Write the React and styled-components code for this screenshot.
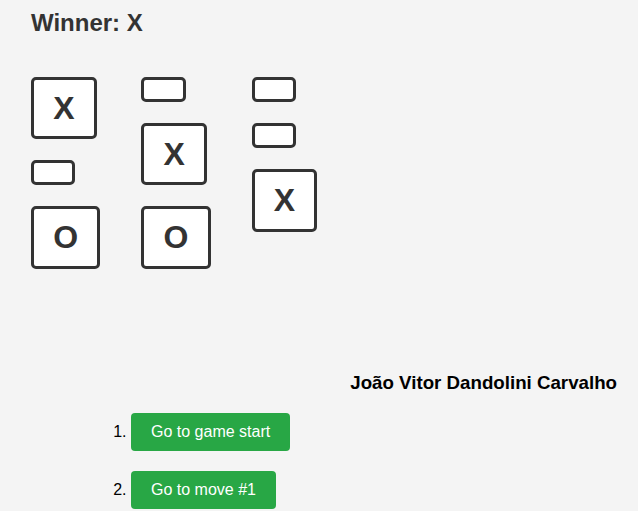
import React from "react";
import styled, { createGlobalStyle } from "styled-components";

const GlobalStyle = createGlobalStyle`
  html, body {
    margin: 0;
    overflow: hidden;
    background: #f4f4f4;
  }
  body {
    font-family: "Liberation Sans", Arial, sans-serif;
  }
`;

const Page = styled.div`
  padding: 9px 21px 0 31px;
`;

const Status = styled.div`
  font-size: 24px;
  font-weight: 700;
  color: #333;
`;

const Board = styled.div`
  display: flex;
  gap: 41px;
  margin-top: 40px;
`;

const Column = styled.div`
  display: flex;
  flex-direction: column;
  align-items: flex-start;
  gap: 21px;
`;

const Square = styled.button`
  font-family: "Liberation Sans", Arial, sans-serif;
  font-size: 32px;
  font-weight: 700;
  color: #333;
  background: #fff;
  border: 3px solid #333;
  border-radius: 5px;
  padding: 9.6px 19.2px;
  cursor: pointer;
`;

const GameInfo = styled.div`
  margin-top: 103px;
`;

const Name = styled.h3`
  margin: 0;
  font-size: 18.72px;
  font-weight: 700;
  color: #000;
  text-align: right;
`;

const Moves = styled.ol`
  margin: 19px 0 0 60px;
  padding-left: 40px;
  font-size: 16px;
  color: #000;
`;

const Move = styled.li`
  margin-bottom: 20px;
`;

const MoveButton = styled.button`
  font-family: "Liberation Sans", Arial, sans-serif;
  font-size: 16px;
  color: #fff;
  background: #28a745;
  border: none;
  border-radius: 4px;
  padding: 10px 20px;
  cursor: pointer;
`;

const columns = [
  ["X", null, "O"],
  [null, "X", "O"],
  [null, null, "X"],
];

const moves = ["Go to game start", "Go to move #1"];

const App = () => {
  return (
    <Page>
      <GlobalStyle />
      <Status>Winner: X</Status>
      <Board>
        {columns.map((col, i) => (
          <Column key={i}>
            {col.map((value, j) => (
              <Square key={j}>{value}</Square>
            ))}
          </Column>
        ))}
      </Board>
      <GameInfo>
        <Name>João Vitor Dandolini Carvalho</Name>
        <Moves>
          {moves.map((label) => (
            <Move key={label}>
              <MoveButton>{label}</MoveButton>
            </Move>
          ))}
        </Moves>
      </GameInfo>
    </Page>
  );
};

export default App;
